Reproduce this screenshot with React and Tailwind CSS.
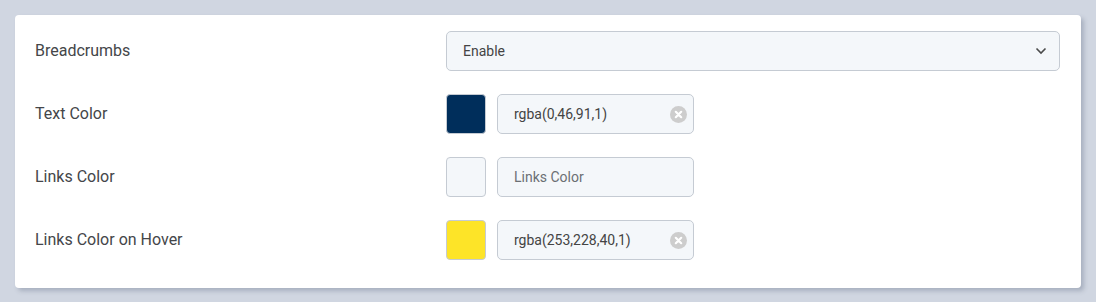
import React from 'react';

const rows = [
  { label: 'Text Color', swatch: 'bg-[#002e5b]', value: 'rgba(0,46,91,1)' },
  { label: 'Links Color', swatch: 'bg-[#f4f7fa]', value: '', placeholder: 'Links Color' },
  { label: 'Links Color on Hover', swatch: 'bg-[#fde428]', value: 'rgba(253,228,40,1)' },
];

const ClearIcon = () => (
  <svg width="17" height="17" viewBox="0 0 17 17">
    <circle cx="8.5" cy="8.5" r="8.5" fill="#cdcdcd" />
    <path d="M5.8 5.8 L11.2 11.2 M11.2 5.8 L5.8 11.2" stroke="#fff" strokeWidth="2.2" strokeLinecap="round" />
  </svg>
);

const App = () => {
  return (
    <div className="min-h-[302px] w-[1096px] bg-[#d0d6e1] pt-[15px] pl-[15px] font-['Roboto',sans-serif]">
      <div className="w-[1066px] rounded-[4px] bg-white pl-5 pr-[21px] pt-4 pb-[28px] shadow-[3px_3px_4px_rgba(120,130,150,0.45)]">
        {/* Breadcrumbs */}
        <div className="flex h-10 items-center">
          <div className="w-[411px] text-[16px] text-[#444649]">Breadcrumbs</div>
          <div className="flex h-10 flex-1 items-center justify-between rounded-[5px] border border-[#c5cbd3] bg-[#f4f7fa] pl-4 pr-3">
            <span className="text-[14px] text-[#444]">Enable</span>
            <svg width="12" height="8" viewBox="0 0 12 8">
              <path d="M1.5 1.5 L6 6 L10.5 1.5" fill="none" stroke="#4a4a4a" strokeWidth="1.6" />
            </svg>
          </div>
        </div>

        {rows.map((row) => (
          <div key={row.label} className="mt-[23px] flex h-10 items-center">
            <div className="w-[411px] text-[16px] text-[#444649]">{row.label}</div>
            <div className={`h-10 w-10 rounded-[4px] border border-[#c5cbd3] ${row.swatch}`} />
            <div className="ml-[11px] flex h-10 w-[197px] items-center justify-between rounded-[5px] border border-[#c5cbd3] bg-[#f4f7fa] pl-4 pr-[6px]">
              {row.value ? (
                <span className="text-[14px] text-[#444]">{row.value}</span>
              ) : (
                <span className="text-[14px] text-[#6b6f74]">{row.placeholder}</span>
              )}
              {row.value && <ClearIcon />}
            </div>
          </div>
        ))}
      </div>
    </div>
  );
};

export default App;
